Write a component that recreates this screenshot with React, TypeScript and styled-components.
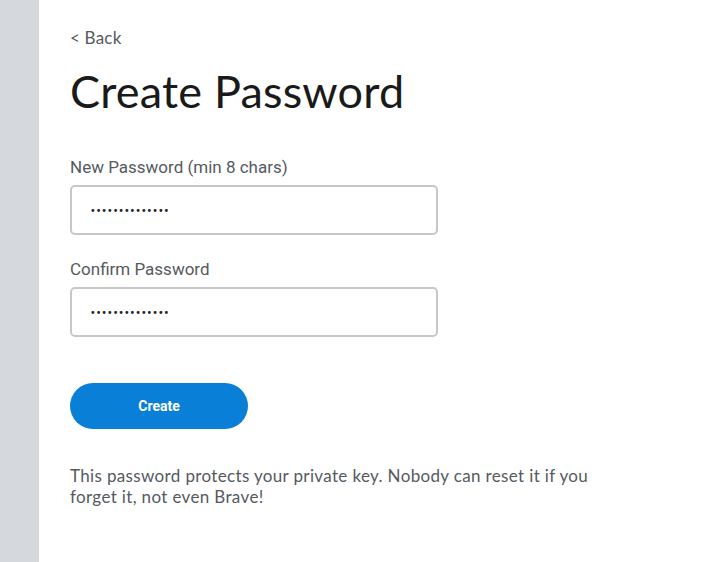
import React from "react";
import styled, { createGlobalStyle } from "styled-components";

const Global = createGlobalStyle`
  html, body { margin: 0; padding: 0; background: #ffffff; }
  body { font-family: Lato, "Noto Sans", sans-serif; }
  * { box-sizing: border-box; }
`;

const Page = styled.div`
  display: flex;
  width: 710px;
  height: 562px;
  overflow: hidden;
`;

const Sidebar = styled.div`
  width: 39px;
  flex: none;
  background: #d5d8dc;
`;

const Main = styled.div`
  flex: 1;
  padding: 28px 0 0 31px;
  display: flex;
  flex-direction: column;
`;

const BackLink = styled.a`
  font-family: Lato, sans-serif;
  font-size: 17px;
  letter-spacing: 0.2px;
  color: #555a60;
  text-decoration: none;
  line-height: 20px;
`;

const Title = styled.h1`
  margin: 17px 0 0 0;
  font-family: Lato, sans-serif;
  font-weight: 400;
  font-size: 45px;
  letter-spacing: 0.2px;
  line-height: 52px;
  color: #1a1a1a;
`;

const Form = styled.div`
  margin-top: 41px;
  display: flex;
  flex-direction: column;
`;

const Label = styled.label<{ $top?: number }>`
  font-family: Roboto, sans-serif;
  font-size: 17px;
  color: #555a5f;
  line-height: 19px;
  margin-top: ${(p) => p.$top ?? 0}px;
`;

const Input = styled.input`
  margin-top: 8px;
  width: 368px;
  height: 50px;
  border: 2px solid #c6c7c8;
  border-radius: 5px;
  padding: 0 18px;
  font-size: 9.6px;
  color: #222;
  outline: none;
  font-family: "DejaVu Sans", sans-serif;
`;

const Button = styled.button`
  margin-top: 46px;
  width: 178px;
  height: 46px;
  border: none;
  border-radius: 23px;
  background: #0a7fd8;
  color: #ffffff;
  font-family: Roboto, sans-serif;
  font-weight: 700;
  font-size: 14px;
  cursor: pointer;
`;

const Note = styled.p`
  margin: 36px 0 0 0;
  width: 540px;
  font-family: Lato, sans-serif;
  font-size: 17px;
  letter-spacing: 0.35px;
  line-height: 21px;
  color: #555a60;
`;

export default function App() {
  return (
    <>
      <Global />
      <Page>
        <Sidebar />
        <Main>
          <BackLink href="#">&lt; Back</BackLink>
          <Title>Create Password</Title>
          <Form>
            <Label>New Password (min 8 chars)</Label>
            <Input type="password" defaultValue="12345678901234" />
            <Label $top={25}>Confirm Password</Label>
            <Input type="password" defaultValue="12345678901234" />
          </Form>
          <div>
            <Button>Create</Button>
          </div>
          <Note>
            This password protects your private key. Nobody can reset it if you
            forget it, not even Brave!
          </Note>
        </Main>
      </Page>
    </>
  );
}
